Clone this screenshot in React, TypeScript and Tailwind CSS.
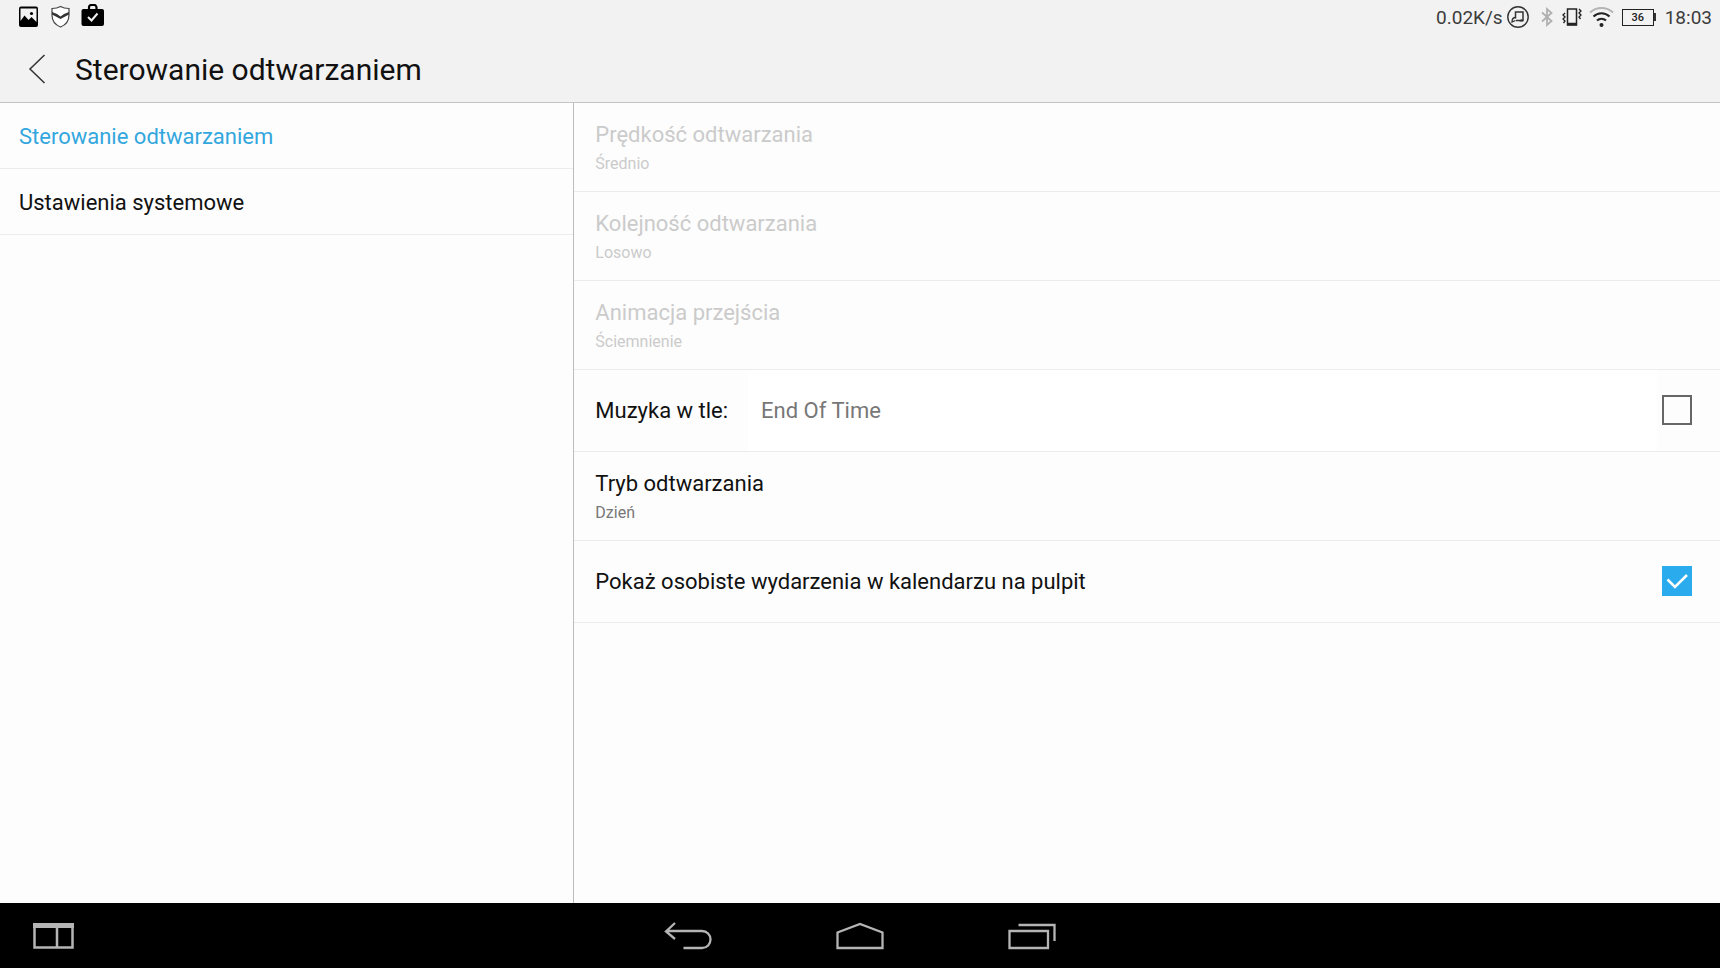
import { useState } from 'react';

interface Preference {
    title: string;
    value: string;
    disabled?: boolean;
}

const disabledPreferences: Preference[] = [
    { title: 'Prędkość odtwarzania', value: 'Średnio', disabled: true },
    { title: 'Kolejność odtwarzania', value: 'Losowo', disabled: true },
    { title: 'Animacja przejścia', value: 'Ściemnienie', disabled: true },
];

function StatusBar() {
    return (
        <div className="flex h-9 items-start justify-between pl-[19px] pr-2 text-[#3c3c3c]">
            <div className="flex items-center pt-1">
                {/* Gallery */}
                <svg width="20" height="24" viewBox="0 0 20 24" className="mr-3">
                    <rect x="0" y="2.5" width="19" height="20.5" rx="2" fill="#000" />
                    <path d="M1.5 4.500H17.500V18L15 15.500L12.500 13L9.500 16L5.500 11.500L1.500 17Z" fill="#f2f2f2" />
                    <circle cx="12.5" cy="9.5" r="1.6" fill="#000" />
                </svg>
                {/* Shield */}
                <svg width="20" height="24" viewBox="0 0 20 24" className="mr-[10px]">
                    <path
                        d="M9.5 2.5C7 4 3.500 4.500 1 4.500V11C1 17 4.500 21 9.500 23C14.500 21 18 17 18 11V4.500C15.500 4.500 12 4 9.500 2.500Z"
                        fill="#fff"
                        stroke="#444"
                        strokeWidth="1.2"
                    />
                    <path d="M1 8L6 10L9.500 12.500L13 10L18 8V10.500L9.500 15L1 10.500Z" fill="#333" />
                </svg>
                {/* Work bag */}
                <svg width="24" height="24" viewBox="0 0 24 24">
                    <path
                        d="M8 5V3.500A2.500 2.500 0 0 1 10.500 1H13A2.500 2.500 0 0 1 15.500 3.500V5"
                        fill="none"
                        stroke="#000"
                        strokeWidth="2.200"
                    />
                    <rect x="0.500" y="5" width="22.500" height="17" rx="2" fill="#000" />
                    <path d="M7 13L10.500 16.500L16.500 9.500" fill="none" stroke="#f2f2f2" strokeWidth="2" />
                </svg>
            </div>

            <div className="flex h-[34px] items-center text-[19px] leading-6">
                <span className="mr-1 pt-0.5">0.02K/s</span>
                {/* Music */}
                <svg width="22" height="22" viewBox="0 0 22 22" fill="none" stroke="#333" className="mr-3">
                    <circle cx="11" cy="11" r="10.200" strokeWidth="1.400" />
                    <path d="M8.500 12.500V6H16V14.500H9" strokeWidth="1.500" />
                    <path d="M8.500 11.500C6 11.500 5 13.500 5 16L8.500 14.500" strokeWidth="1.300" />
                    <path d="M13.500 13.500H16V15.500H12.500Z" fill="#333" stroke="none" />
                </svg>
                {/* Bluetooth */}
                <svg width="12" height="20" viewBox="0 0 12 20" fill="none" stroke="#b0b0b0" strokeWidth="1.800" className="mr-[9px]">
                    <path d="M1 5.500L10.500 14L6 18V2L10.500 6L1 14.500" />
                </svg>
                {/* Vibrate */}
                <svg width="20" height="20" viewBox="0 0 20 20" fill="none" stroke="#222" className="mr-[7px]">
                    <rect x="5.500" y="2" width="9" height="16" strokeWidth="1.500" />
                    <path d="M5 17H15" strokeWidth="2.500" />
                    <path d="M3 6L1 8L3 10L1 12L3 14L1.500 16" strokeWidth="1.300" />
                    <path d="M17 2L19 4L17 6L19 8L17 10L18.500 12" strokeWidth="1.300" />
                </svg>
                {/* Wi-Fi */}
                <svg width="25" height="22" viewBox="0 0 25 22" fill="none" strokeWidth="2" className="mr-2">
                    <path d="M1 6.500C7.500 0.500 17.500 0.500 24 6.500" stroke="#b4b4b4" />
                    <path d="M4.500 10.500C9 6 16 6 20.500 10.500" stroke="#222" />
                    <path d="M8 14.500C10.500 12 14.500 12 17 14.500" stroke="#222" />
                    <circle cx="12.500" cy="19" r="2" fill="#222" />
                </svg>
                <div className="mr-[9px] flex items-center">
                    <div className="flex h-[17px] w-8 items-center justify-center border border-[#222] text-[11px] font-medium leading-none text-[#222]">
                        36
                    </div>
                    <div className="h-2 w-0.5 bg-[#333]" />
                </div>
                <span className="pt-0.5">18:03</span>
            </div>
        </div>
    );
}

function Header() {
    return (
        <header className="border-b border-[#c4c4c4] bg-[#f2f2f2]">
            <StatusBar />
            <div className="flex h-[66px] items-center pl-[28px]">
                <button aria-label="Wstecz" className="mr-[29px]">
                    <svg width="18" height="30" viewBox="0 0 18 30" fill="none" stroke="#333" strokeWidth="1.500">
                        <path d="M16.500 1L2 15L16.500 29" />
                    </svg>
                </button>
                <h1 className="pt-0.5 text-[30px] leading-9 text-[#111]">Sterowanie odtwarzaniem</h1>
            </div>
        </header>
    );
}

function PreferenceRow({ title, value, disabled }: Preference) {
    return (
        <button
            disabled={disabled}
            className="flex h-[89px] w-full flex-col border-b border-[#ececec] pl-[21px] pt-[18px] text-left text-[#111] disabled:text-[#cbcbcb]"
        >
            <span className="text-[22px] leading-7">{title}</span>
            <span className={disabled ? 'pt-[3px] text-base leading-6' : 'pt-[3px] text-base leading-6 text-[#777]'}>
                {value}
            </span>
        </button>
    );
}

interface CheckboxProps {
    id: string;
    checked: boolean;
    onChange: (checked: boolean) => void;
}

function Checkbox({ id, checked, onChange }: CheckboxProps) {
    return (
        <span className="relative mb-0.5 mr-[28px] block size-[30px] shrink-0">
            <input
                id={id}
                type="checkbox"
                checked={checked}
                onChange={(e) => onChange(e.target.checked)}
                className="block size-[30px] appearance-none border-2 border-[#666] checked:border-[#29abee] checked:bg-[#29abee]"
            />
            {checked && (
                <svg
                    width="30"
                    height="30"
                    viewBox="0 0 30 30"
                    fill="none"
                    stroke="#fff"
                    strokeWidth="2.500"
                    className="pointer-events-none absolute inset-0"
                >
                    <path d="M5.500 13.500L13 21L25 9" />
                </svg>
            )}
        </span>
    );
}

function NavigationBar() {
    return (
        <nav className="grid h-[65px] grid-cols-[1fr_auto_1fr] items-center bg-black">
            <button aria-label="Podziel ekran" className="ml-[33px] justify-self-start">
                <svg width="41" height="26" viewBox="0 0 41 26" fill="none" stroke="#b5b5b5">
                    <path d="M0 2.500H41" strokeWidth="5" />
                    <path d="M1.500 1V24.500H39.500V1M24 4V24" strokeWidth="2.500" />
                </svg>
            </button>
            <div className="flex items-center gap-[124px]">
                <button aria-label="Cofnij">
                    <svg width="48" height="28" viewBox="0 0 48 28" fill="none" stroke="#b5b5b5" strokeWidth="2.300">
                        <path d="M11 1L2 9.500L11 17M3 9H38C43 9 46.500 13 46.500 17.500S43 26 38 26H19.500" />
                    </svg>
                </button>
                <button aria-label="Ekran główny">
                    <svg width="48" height="28" viewBox="0 0 48 28" fill="none" stroke="#b5b5b5" strokeWidth="2.300">
                        <path d="M1.500 26V10.500L24 2L46.500 10.500V26Z" />
                    </svg>
                </button>
                <button aria-label="Ostatnie aplikacje">
                    <svg width="48" height="28" viewBox="0 0 48 28" fill="none" stroke="#b5b5b5" strokeWidth="2.300">
                        <path d="M1.500 9H40V26H1.500ZM10.500 3H46.500V19" />
                    </svg>
                </button>
            </div>
        </nav>
    );
}

export default function App() {
    const [music, setMusic] = useState(false);
    const [events, setEvents] = useState(true);

    return (
        <div className="flex min-h-screen flex-col bg-[#fdfdfd] font-['Roboto',sans-serif] text-[#111]">
            <Header />
            <div className="flex grow">
                <aside className="w-1/3 text-[22px] leading-7">
                    <a
                        href="#playback"
                        className="flex h-[66px] items-center border-b border-[#ececec] pl-[19px] pt-0.5 text-[#33a7dd]"
                    >
                        Sterowanie odtwarzaniem
                    </a>
                    <a href="#system" className="flex h-[66px] items-center border-b border-[#ececec] pl-[19px] pt-0.5">
                        Ustawienia systemowe
                    </a>
                </aside>

                <main className="grow border-l border-[#bdbdbd]">
                    {disabledPreferences.map((pref) => (
                        <PreferenceRow key={pref.title} {...pref} />
                    ))}

                    <div className="flex h-[82px] items-center border-b border-[#ececec] pl-[21px] text-[22px] leading-7">
                        <label htmlFor="music" className="pr-5">
                            Muzyka w tle:
                        </label>
                        <button className="mr-[5px] grow self-stretch bg-white pl-[13px] text-left text-[#777]">
                            End Of Time
                        </button>
                        <Checkbox id="music" checked={music} onChange={setMusic} />
                    </div>

                    <PreferenceRow title="Tryb odtwarzania" value="Dzień" />

                    <div className="flex h-[82px] items-center justify-between border-b border-[#ececec] pl-[21px] text-[22px] leading-7">
                        <label htmlFor="events">Pokaż osobiste wydarzenia w kalendarzu na pulpit</label>
                        <Checkbox id="events" checked={events} onChange={setEvents} />
                    </div>
                </main>
            </div>
            <NavigationBar />
        </div>
    );
}
